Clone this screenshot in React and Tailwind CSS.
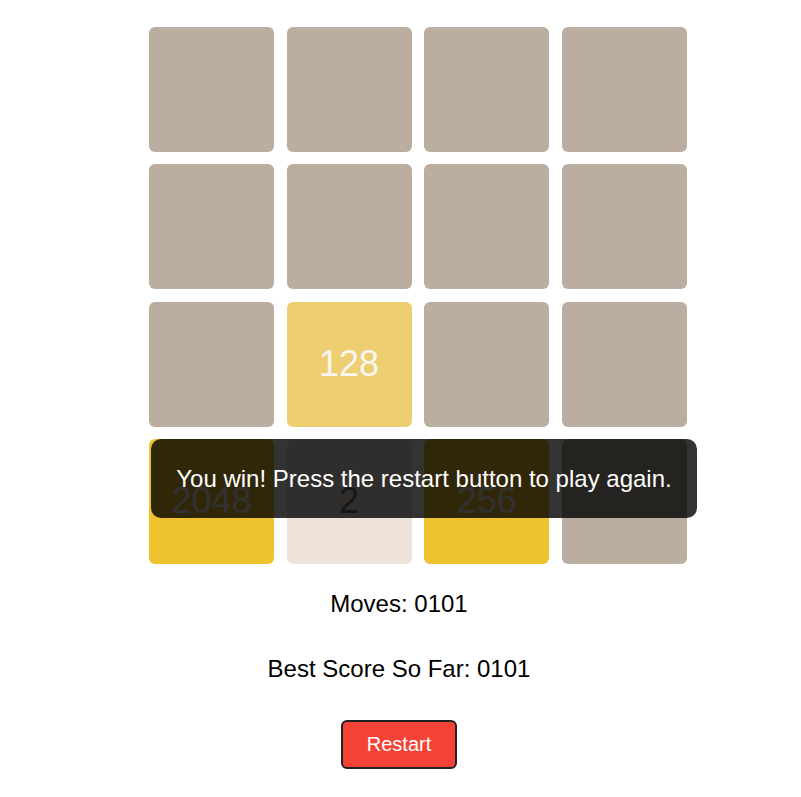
const board = [
  [0, 0, 0, 0],
  [0, 0, 0, 0],
  [0, 128, 0, 0],
  [2048, 2, 256, 0],
]

const tileStyle = {
  0: 'bg-[#bbada0]',
  2: 'bg-[#eee4da] text-[#776e65]',
  128: 'bg-[#edcf72] text-[#f9f6f2]',
  256: 'bg-[#efc230] text-[#f9f6f2]',
  2048: 'bg-[#efc230] text-[#f9f6f2]',
}

const Tile = ({ value }) => (
  <div
    className={`w-[125px] h-[125px] rounded-md flex items-center justify-center text-[36px] leading-none ${tileStyle[value]}`}
  >
    {value !== 0 && value}
  </div>
)

const App = () => {
  return (
    <div className="min-h-screen bg-white text-black font-['Liberation_Sans',Arial,sans-serif] pt-[27px]">
      <div className="relative ml-[149px] w-[538px] grid grid-cols-4 gap-x-[12.5px] gap-y-[12.34px]">
        {board.flat().map((v, i) => (
          <Tile key={i} value={v} />
        ))}

        {/* win message */}
        <div className="absolute left-[2px] top-[412px] w-[546px] h-[79px] rounded-[10px] bg-black/80 text-white text-[24px] flex items-center justify-center">
          You win! Press the restart button to play again.
        </div>
      </div>

      <div className="flex flex-col items-center pr-[3px]">
        <p className="mt-[26px] text-[24px] leading-7">Moves: 0101</p>
        <p className="mt-[37px] text-[24px] leading-7">Best Score So Far: 0101</p>
        <button className="mt-[37px] w-[116px] h-[49px] rounded-md border-2 border-[#222] bg-[#f44336] text-white text-[20px]">
          Restart
        </button>
      </div>
    </div>
  )
}

export default App
